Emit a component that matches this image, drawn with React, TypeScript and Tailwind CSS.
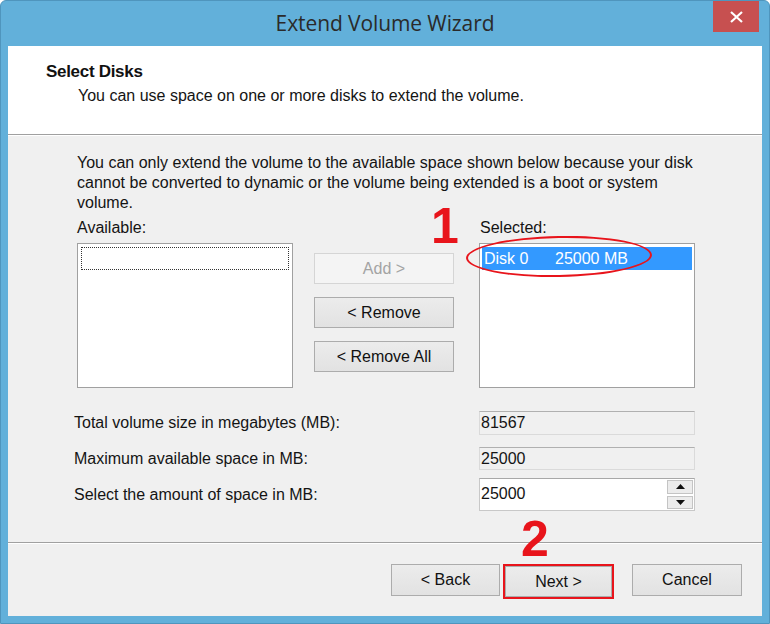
import React from "react";

function Btn({ label, disabled, className = "" }: { label: string; disabled?: boolean; className?: string }) {
  return (
    <div
      className={
        "flex items-center justify-center h-[31px] border text-[16px] " +
        (disabled
          ? "border-[#d5d5d5] bg-[#f4f4f4] text-[#a3a3a3] "
          : "border-[#acacac] bg-gradient-to-b from-[#ececec] to-[#e2e2e2] text-[#111] ") +
        className
      }
    >
      {label}
    </div>
  );
}

export default function App() {
  return (
    <div className="w-[770px] h-[624px] bg-[#62b0da] border border-[#4f95bd] rounded-t-[6px] flex flex-col font-['Liberation_Sans',Arial,sans-serif] text-[#141414] overflow-hidden">
      {/* Title bar */}
      <div className="relative h-[45px] flex items-center justify-center shrink-0">
        <span className="font-['Open_Sans',sans-serif] text-[21px] text-[#2a2a2a] tracking-[-0.1px] mt-[1px]">
          Extend Volume Wizard
        </span>
        <div className="absolute top-0 right-[10px] w-[46px] h-[31px] bg-[#c75050] flex items-center justify-center">
          <svg width="13" height="12" viewBox="0 0 13 12">
            <path d="M1 1 L12 11 M12 1 L1 11" stroke="white" strokeWidth="2.2" />
          </svg>
        </div>
      </div>

      {/* Client area */}
      <div className="relative mx-[7px] mb-[7px] flex-1 bg-[#f0f0f0] flex flex-col">
        {/* Header */}
        <div className="h-[89px] bg-white border-b border-[#a0a0a0] pl-[38px] pt-[16px] shrink-0">
          <div className="text-[17px] font-bold text-[#111] leading-[20px] tracking-[-0.3px]">Select Disks</div>
          <div className="pl-[32px] mt-[4px] text-[16px] leading-[19px]">
            You can use space on one or more disks to extend the volume.
          </div>
        </div>
        <div className="h-[1px] bg-white shrink-0" />

        {/* Body */}
        <div className="flex-1 flex flex-col pl-[69px] pt-[17px]">
          <div className="flex flex-col items-start text-[16px] leading-[20px]">
            <span>You can only extend the volume to the available space shown below because your disk</span>
            <span>cannot be converted to dynamic or the volume being extended is a boot or system</span>
            <span>volume.</span>
          </div>

          <div className="flex mt-[5px]">
            <div className="w-[216px] flex flex-col">
              <div className="text-[16px] leading-[20px] h-[20px]">Available:</div>
              <div className="mt-[5px] h-[145px] bg-white border border-[#a0a0a0] p-[3px]">
                <div className="h-[23px] border border-dotted border-[#333]" />
              </div>
            </div>

            <div className="ml-[21px] w-[140px] flex flex-col gap-[13px] pt-[35px]">
              <Btn label="Add >" disabled />
              <Btn label="< Remove" />
              <Btn label="< Remove All" />
            </div>

            <div className="ml-[25px] w-[216px] flex flex-col">
              <div className="text-[16px] leading-[20px] h-[20px] pl-[1px]">Selected:</div>
              <div className="mt-[5px] h-[145px] bg-white border border-[#a0a0a0] p-[2px] pt-[3px]">
                <div className="h-[23px] bg-[#3399ff] text-white text-[16px] leading-[23px] pl-[2px] flex">
                  <span className="w-[71px]">Disk 0</span>
                  <span>25000 MB</span>
                </div>
              </div>
            </div>
          </div>

          {/* Fields */}
          <div className="flex flex-col mt-[23px] -ml-[3px]">
            <div className="flex items-center h-[24px]">
              <span className="w-[405px] text-[16px]">Total volume size in megabytes (MB):</span>
              <div className="w-[216px] h-[24px] bg-[#f0f0f0] border border-[#dadada] border-t-[#b0b0b0] text-[16px] leading-[22px] pl-[1px]">
                81567
              </div>
            </div>
            <div className="flex items-center h-[23px] mt-[12px]">
              <span className="w-[405px] text-[16px]">Maximum available space in MB:</span>
              <div className="w-[216px] h-[23px] bg-[#f0f0f0] border border-[#dadada] border-t-[#b0b0b0] text-[16px] leading-[21px] pl-[1px]">
                25000
              </div>
            </div>
            <div className="flex items-center h-[33px] mt-[8px]">
              <span className="w-[405px] text-[16px]">Select the amount of space in MB:</span>
              <div className="w-[216px] h-[33px] bg-white border border-[#c8c8c8] border-t-[#a8a8a8] flex">
                <span className="flex-1 text-[16px] leading-[29px] pl-[1px]">25000</span>
                <div className="w-[28px] flex flex-col gap-[2px] p-[1px] pr-[1px]">
                  <div className="flex-1 bg-[#ececec] border border-[#c4c4c4] flex items-center justify-center">
                    <svg width="9" height="5" viewBox="0 0 9 5"><path d="M4.5 0 L9 5 L0 5 Z" fill="#111" /></svg>
                  </div>
                  <div className="flex-1 bg-[#ececec] border border-[#c4c4c4] flex items-center justify-center">
                    <svg width="9" height="5" viewBox="0 0 9 5"><path d="M0 0 L9 0 L4.5 5 Z" fill="#111" /></svg>
                  </div>
                </div>
              </div>
            </div>
          </div>
        </div>

        {/* Separator */}
        <div className="h-[1px] bg-[#a0a0a0] shrink-0" />
        <div className="h-[1px] bg-white shrink-0" />

        {/* Footer buttons */}
        <div className="h-[72px] shrink-0 flex justify-end items-start pt-[20px] pr-[20px]">
          <Btn label="< Back" className="w-[109px] h-[32px]" />
          <div className="ml-[3px] border-2 border-[#e8141b] p-0">
            <Btn label="Next >" className="w-[107px] h-[30px] border-[#acacac]" />
          </div>
          <Btn label="Cancel" className="w-[110px] h-[32px] ml-[18px]" />
        </div>

        {/* Annotations */}
        <div className="absolute left-[458px] top-[190px] w-[186px] h-[41px] rounded-[50%] border-[2.5px] border-[#e8141b] -rotate-[1deg]" />
        <div className="absolute left-[423px] top-[161px] text-[#e8141b] font-bold text-[50px] leading-[38px]">1</div>
        <div className="absolute left-[513px] top-[474px] text-[#e8141b] font-bold text-[50px] leading-[38px]">2</div>
      </div>
    </div>
  );
}
